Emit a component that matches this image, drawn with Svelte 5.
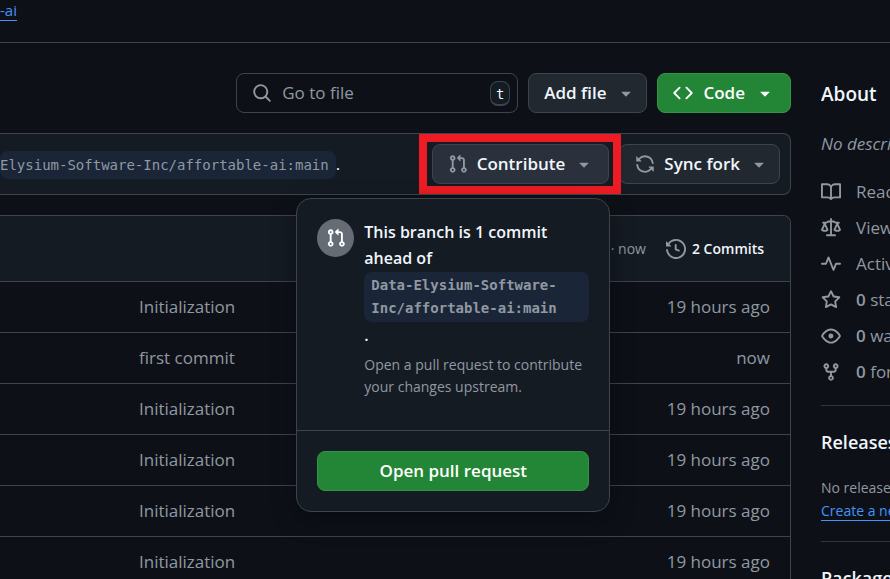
<script>
  const icons = {
    search: 'M10.68 11.74a6 6 0 0 1-7.922-8.982 6 6 0 0 1 8.982 7.922l3.04 3.04a.749.749 0 0 1-.326 1.275.749.749 0 0 1-.734-.215ZM11.5 7a4.499 4.499 0 1 0-8.997 0A4.499 4.499 0 0 0 11.5 7Z',
    code: 'm11.28 3.22 4.25 4.25a.75.75 0 0 1 0 1.06l-4.25 4.25a.749.749 0 0 1-1.275-.326.749.749 0 0 1 .215-.734L13.94 8l-3.72-3.72a.749.749 0 0 1 .326-1.275.749.749 0 0 1 .734.215Zm-6.56 0a.751.751 0 0 1 1.042.018.751.751 0 0 1 .018 1.042L2.06 8l3.72 3.72a.749.749 0 0 1-.326 1.275.749.749 0 0 1-.734-.215L.47 8.53a.75.75 0 0 1 0-1.06Z',
    caret: 'm4.427 7.427 3.396 3.396a.25.25 0 0 0 .354 0l3.396-3.396A.25.25 0 0 0 11.396 7H4.604a.25.25 0 0 0-.177.427Z',
    pull: 'M1.5 3.25a2.25 2.25 0 1 1 3 2.122v5.256a2.251 2.251 0 1 1-1.5 0V5.372A2.25 2.25 0 0 1 1.5 3.25Zm5.677-.177L9.573.677A.25.25 0 0 1 10 .854V2.5h1A2.5 2.5 0 0 1 13.5 5v5.628a2.251 2.251 0 1 1-1.5 0V5a1 1 0 0 0-1-1h-1v1.646a.25.25 0 0 1-.427.177L7.177 3.427a.25.25 0 0 1 0-.354ZM3.75 2.5a.75.75 0 1 0 0 1.5.75.75 0 0 0 0-1.5Zm0 9.5a.75.75 0 1 0 0 1.5.75.75 0 0 0 0-1.5Zm8.25.75a.75.75 0 1 0 1.5 0 .75.75 0 0 0-1.5 0Z',
    sync: 'M1.705 8.005a.75.75 0 0 1 .834.656 5.5 5.5 0 0 0 9.592 2.97l-1.204-1.204a.25.25 0 0 1 .177-.427h3.646a.25.25 0 0 1 .25.25v3.646a.25.25 0 0 1-.427.177l-1.38-1.38A7.002 7.002 0 0 1 1.05 8.84a.75.75 0 0 1 .656-.834ZM8 2.5a5.487 5.487 0 0 0-4.131 1.869l1.204 1.204A.25.25 0 0 1 4.896 6H1.25A.25.25 0 0 1 1 5.75V2.104a.25.25 0 0 1 .427-.177l1.38 1.38A7.002 7.002 0 0 1 14.95 7.16a.75.75 0 0 1-1.49.178A5.5 5.5 0 0 0 8 2.5Z',
    history: 'm.427 1.927 1.215 1.215a8.002 8.002 0 1 1-1.6 5.685.75.75 0 1 1 1.493-.154 6.5 6.5 0 1 0 1.18-4.458l1.358 1.358A.25.25 0 0 1 3.896 6H.25A.25.25 0 0 1 0 5.75V2.104a.25.25 0 0 1 .427-.177ZM7.75 4a.75.75 0 0 1 .75.75v2.992l2.028.812a.75.75 0 0 1-.557 1.392l-2.5-1A.751.751 0 0 1 7 8.25v-3.5A.75.75 0 0 1 7.75 4Z',
    book: 'M0 1.75A.75.75 0 0 1 .75 1h4.253c1.227 0 2.317.59 3 1.501A3.743 3.743 0 0 1 11.006 1h4.245a.75.75 0 0 1 .75.75v10.5a.75.75 0 0 1-.75.75h-4.507a2.25 2.25 0 0 0-1.591.659l-.622.621a.75.75 0 0 1-1.06 0l-.622-.621A2.25 2.25 0 0 0 5.258 13H.75a.75.75 0 0 1-.75-.75Zm7.251 10.324.004-5.073-.002-2.253A2.25 2.25 0 0 0 5.003 2.5H1.5v9h3.757a3.75 3.75 0 0 1 1.994.574ZM8.755 4.75l-.004 7.322a3.752 3.752 0 0 1 1.992-.572H14.5v-9h-3.495a2.25 2.25 0 0 0-2.25 2.25Z',
    law: 'M8.75.75V2h.985c.304 0 .603.08.867.231l1.29.736c.038.022.08.033.124.033h2.234a.75.75 0 0 1 0 1.5h-.427l2.111 4.692a.75.75 0 0 1-.154.838l-.53-.53.529.531-.001.002-.002.002-.006.006-.006.005-.01.01-.045.04c-.21.176-.441.327-.686.45C14.556 10.78 13.88 11 13 11a4.498 4.498 0 0 1-2.023-.454 3.544 3.544 0 0 1-.686-.45l-.045-.04-.016-.015-.006-.006-.004-.004v-.001a.75.75 0 0 1-.154-.838L12.178 4.5h-.162c-.305 0-.604-.079-.868-.231l-1.29-.736a.245.245 0 0 0-.124-.033H8.75V13h2.5a.75.75 0 0 1 0 1.5h-6.5a.75.75 0 0 1 0-1.5h2.5V3.5h-.984a.245.245 0 0 0-.124.033l-1.289.737c-.265.15-.564.23-.869.23h-.162l2.112 4.692a.75.75 0 0 1-.154.838l-.53-.53.529.531-.001.002-.002.002-.006.006-.016.015-.045.04c-.21.176-.441.327-.686.45C4.556 10.78 3.88 11 3 11a4.498 4.498 0 0 1-2.023-.454 3.544 3.544 0 0 1-.686-.45l-.045-.04-.016-.015-.006-.006-.004-.004v-.001a.75.75 0 0 1-.154-.838L2.178 4.5H1.75a.75.75 0 0 1 0-1.5h2.234a.249.249 0 0 0 .125-.033l1.288-.737c.265-.15.564-.23.869-.23h.984V.75a.75.75 0 0 1 1.5 0Zm2.945 8.477c.285.135.718.273 1.305.273s1.02-.138 1.305-.273L13 6.327Zm-10 0c.285.135.718.273 1.305.273s1.02-.138 1.305-.273L3 6.327Z',
    pulse: 'M6 2c.306 0 .582.187.696.471L10 10.731l1.304-3.26A.751.751 0 0 1 12 7h3.25a.75.75 0 0 1 0 1.5h-2.742l-1.812 4.528a.751.751 0 0 1-1.392 0L6 4.77 4.696 8.03A.75.75 0 0 1 4 8.5H.75a.75.75 0 0 1 0-1.5h2.742l1.812-4.529A.751.751 0 0 1 6 2Z',
    star: 'M8 .25a.75.75 0 0 1 .673.418l1.882 3.815 4.21.612a.75.75 0 0 1 .416 1.279l-3.046 2.97.719 4.192a.751.751 0 0 1-1.088.791L8 12.347l-3.766 1.98a.75.75 0 0 1-1.088-.79l.72-4.194L.818 6.374a.75.75 0 0 1 .416-1.28l4.21-.611L7.327.668A.75.75 0 0 1 8 .25Zm0 2.445L6.615 5.5a.75.75 0 0 1-.564.41l-3.097.45 2.24 2.184a.75.75 0 0 1 .216.664l-.528 3.084 2.769-1.456a.75.75 0 0 1 .698 0l2.77 1.456-.53-3.084a.75.75 0 0 1 .216-.664l2.24-2.183-3.096-.45a.75.75 0 0 1-.564-.41L8 2.694Z',
    eye: 'M8 2c1.981 0 3.671.992 4.933 2.078 1.27 1.091 2.187 2.345 2.637 3.023a1.62 1.62 0 0 1 0 1.798c-.45.678-1.367 1.932-2.637 3.023C11.67 13.008 9.981 14 8 14c-1.981 0-3.671-.992-4.933-2.078C1.797 10.83.88 9.576.43 8.898a1.62 1.62 0 0 1 0-1.798c.45-.677 1.367-1.931 2.637-3.022C4.33 2.992 6.019 2 8 2ZM1.679 7.932a.12.12 0 0 0 0 .136c.411.622 1.241 1.75 2.366 2.717C5.176 11.758 6.527 12.5 8 12.5c1.473 0 2.825-.742 3.955-1.715 1.124-.967 1.954-2.096 2.366-2.717a.12.12 0 0 0 0-.136c-.412-.621-1.242-1.75-2.366-2.717C10.824 4.242 9.473 3.5 8 3.5c-1.473 0-2.825.742-3.955 1.715-1.124.967-1.954 2.096-2.366 2.717ZM8 10a2 2 0 1 1-.001-3.999A2 2 0 0 1 8 10Z',
    fork: 'M5 5.372v.878c0 .414.336.75.75.75h4.5a.75.75 0 0 0 .75-.75v-.878a2.25 2.25 0 1 1 1.5 0v.878a2.25 2.25 0 0 1-2.25 2.25h-1.5v2.128a2.251 2.251 0 1 1-1.5 0V8.5h-1.5A2.25 2.25 0 0 1 3.5 6.25v-.878a2.25 2.25 0 1 1 1.5 0ZM5 3.25a.75.75 0 1 0-1.5 0 .75.75 0 0 0 1.5 0Zm6.75.75a.75.75 0 1 0 0-1.5.75.75 0 0 0 0 1.5Zm-3 8.75a.75.75 0 1 0-1.5 0 .75.75 0 0 0 1.5 0Z'
  };

  const files = [
    { message: 'Initialization', age: '19 hours ago' },
    { message: 'first commit', age: 'now' },
    { message: 'Initialization', age: '19 hours ago' },
    { message: 'Initialization', age: '19 hours ago' },
    { message: 'Initialization', age: '19 hours ago' },
    { message: 'Initialization', age: '19 hours ago' }
  ];

  const facts = [
    { icon: 'book', label: 'Readme' },
    { icon: 'law', label: 'View license' },
    { icon: 'pulse', label: 'Activity' },
    { icon: 'star', count: '0', label: 'stars' },
    { icon: 'eye', count: '0', label: 'watching' },
    { icon: 'fork', count: '0', label: 'forks' }
  ];
</script>

{#snippet icon(name)}
  <svg class="icon" viewBox="0 0 16 16" aria-hidden="true"><path d={icons[name]} /></svg>
{/snippet}

<div class="page">
  <header><a href="#repo">-ai</a></header>

  <div class="layout">
    <main>
      <div class="toolbar">
        <div class="search">
          {@render icon('search')}
          <input type="text" placeholder="Go to file" aria-label="Go to file" />
          <kbd>t</kbd>
        </div>
        <button class="btn">Add file {@render icon('caret')}</button>
        <button class="btn primary">{@render icon('code')} Code {@render icon('caret')}</button>
      </div>

      <section class="strip">
        <p><code>Elysium-Software-Inc/affortable-ai:main</code>.</p>
        <div class="actions">
          <div class="contribute">
            <button class="btn open" aria-expanded="true">
              {@render icon('pull')} Contribute {@render icon('caret')}
            </button>
            <div class="highlight"></div>
            <div class="popover">
              <div class="notice">
                <span class="badge">{@render icon('pull')}</span>
                <div>
                  <h3>This branch is 1 commit ahead of <code>Data-Elysium-Software-<br />Inc/affortable-ai:main</code>.</h3>
                  <p>Open a pull request to contribute your changes upstream.</p>
                </div>
              </div>
              <div class="footer">
                <button class="btn primary">Open pull request</button>
              </div>
            </div>
          </div>
          <button class="btn">{@render icon('sync')} Sync fork {@render icon('caret')}</button>
        </div>
      </section>

      <table>
        <thead>
          <tr>
            <th colspan="2">
              <div class="latest">
                <span>· now</span>
                <a href="#commits">{@render icon('history')} 2 Commits</a>
              </div>
            </th>
          </tr>
        </thead>
        <tbody>
          {#each files as file}
            <tr><td>{file.message}</td><td class="age">{file.age}</td></tr>
          {/each}
        </tbody>
      </table>
    </main>

    <aside>
      <section>
        <h2>About</h2>
        <p class="description">No description</p>
        <ul>
          {#each facts as fact}
            <li>
              {@render icon(fact.icon)}
              <span>{#if fact.count}<strong>{fact.count}</strong>{' '}{/if}{fact.label}</span>
            </li>
          {/each}
        </ul>
      </section>
      <section>
        <h2>Releases</h2>
        <p class="small">No releases published<br /><a href="#release">Create a new release</a></p>
      </section>
      <section>
        <h2>Packages</h2>
      </section>
    </aside>
  </div>
</div>

<style>
  :global(body) {
    background: #0d1117;
    overflow: hidden;
  }
  .page {
    height: 100vh;
    overflow: hidden;
    color: #f0f6fc;
    font: 17px/26px "Open Sans", "Noto Sans", sans-serif;
  }
  .page :global(*) {
    box-sizing: border-box;
  }
  h2, h3, p, ul {
    margin: 0;
    padding: 0;
  }
  header {
    height: 43px;
    border-bottom: 1px solid #3d444d;
    font-size: 15px;
    line-height: 20px;
  }
  a {
    color: #4493f8;
    text-underline-offset: 4px;
  }
  .icon {
    width: 20px;
    height: 20px;
    flex: none;
    fill: #9198a1;
  }
  .layout {
    display: flex;
    gap: 30px;
    padding-top: 30px;
  }
  main {
    flex: 1;
    min-width: 0;
  }
  .toolbar {
    display: flex;
    justify-content: flex-end;
    gap: 10px;
  }
  .search {
    display: flex;
    align-items: center;
    width: 282px;
    height: 40px;
    padding: 0 7px 0 15px;
    border: 1px solid #3d444d;
    border-radius: 8px;
  }
  input {
    flex: 1;
    min-width: 0;
    padding: 0 0 0 10px;
    border: 0;
    background: none;
    color: inherit;
    font: inherit;
  }
  input::placeholder {
    color: #9198a1;
    opacity: 1;
  }
  kbd {
    width: 20px;
    height: 25px;
    border: 1px solid #3d444d;
    border-bottom-width: 2px;
    border-radius: 8px;
    background: #151b23;
    font: 14px/24px "DejaVu Sans Mono", monospace;
    text-align: center;
  }
  .btn {
    display: flex;
    align-items: center;
    gap: 10px;
    height: 40px;
    padding: 0 10px 0 15px;
    border: 1px solid #3d444d;
    border-radius: 8px;
    background: #212830;
    color: #f0f6fc;
    font: 600 17px/26px "Open Sans", "Noto Sans", sans-serif;
    white-space: nowrap;
  }
  .actions .btn {
    gap: 9px;
  }
  .btn.open {
    padding-right: 14px;
    background: #2a313c;
  }
  .btn.primary {
    background: #238636;
    border-color: #349445;
    color: #fff;
  }
  .primary .icon, .badge .icon {
    fill: #fff;
  }
  .toolbar .primary {
    padding-right: 15px;
  }
  .strip {
    display: flex;
    align-items: center;
    justify-content: space-between;
    height: 62px;
    margin: 20px 0;
    padding-right: 10px;
    border: 1px solid #3d444d;
    border-left: 0;
    border-radius: 0 8px 8px 0;
    background: #151b23;
  }
  code {
    border-radius: 8px;
    background: #1a2538;
    color: #9198a1;
    font: 14px/23px "DejaVu Sans Mono", monospace;
  }
  .strip > p > code {
    padding: 6px 7px 6px 0;
  }
  .actions {
    display: flex;
    gap: 10px;
  }
  .contribute {
    position: relative;
  }
  .highlight {
    position: absolute;
    z-index: 1;
    inset: -10px -12px -10px -13px;
    border: 8px solid #ed1c24;
    pointer-events: none;
  }
  .popover {
    position: absolute;
    z-index: 2;
    top: 54px;
    right: -1px;
    width: 314px;
    border: 1px solid #3d444d;
    border-radius: 15px;
    background: #151b23;
    box-shadow: 0 8px 24px #01040966;
  }
  .notice {
    display: flex;
    gap: 10px;
    padding: 20px 20px 32px;
  }
  .badge {
    display: grid;
    place-items: center;
    flex: none;
    width: 37px;
    height: 38px;
    border-radius: 50%;
    background: #656c76;
  }
  h3 {
    font-size: 16px;
    font-weight: 600;
    line-height: 26px;
  }
  h3 code {
    display: block;
    margin-top: 1px;
    padding: 2px 7px;
    font-weight: 700;
  }
  .notice p {
    padding-top: 6px;
    color: #9198a1;
    font-size: 14px;
    line-height: 22px;
  }
  .footer {
    padding: 20px;
    border-top: 1px solid #3d444d;
  }
  .footer .btn {
    justify-content: center;
    width: 100%;
    padding: 0;
  }
  table {
    width: 100%;
    border: 1px solid #3d444d;
    border-left: 0;
    border-radius: 0 8px 0 0;
    border-spacing: 0;
    color: #9198a1;
  }
  th {
    height: 65px;
    padding: 0 26px;
    border-radius: 0 8px 0 0;
    background: #151b23;
    font-size: 14px;
    font-weight: 400;
  }
  .latest, .latest a {
    display: flex;
    align-items: center;
    justify-content: flex-end;
  }
  .latest {
    gap: 20px;
  }
  .latest a {
    gap: 6px;
    color: #f0f6fc;
    font-weight: 600;
    text-decoration: none;
  }
  td {
    height: 51px;
    padding: 0 20px 0 139px;
    border-top: 1px solid #3d444d;
  }
  .age {
    padding-left: 0;
    text-align: right;
  }
  aside {
    flex: 0 0 69px;
    overflow: hidden;
    white-space: nowrap;
  }
  aside section {
    padding-bottom: 15px;
  }
  aside section + section {
    padding-top: 23px;
    border-top: 1px solid #2f353d;
  }
  h2 {
    padding-top: 8px;
    font-size: 19px;
    font-weight: 600;
    line-height: 26px;
  }
  section + section h2 {
    padding-top: 0;
    font-size: 18px;
  }
  .description {
    padding: 24px 0 17px;
    color: #9198a1;
    font-style: italic;
  }
  ul {
    color: #9198a1;
    list-style: none;
  }
  li {
    display: flex;
    align-items: center;
    gap: 15px;
    height: 36px;
  }
  strong {
    font-weight: 600;
  }
  .small {
    padding: 21px 0 4px;
    color: #9198a1;
    font-size: 14px;
    line-height: 23px;
  }
</style>
